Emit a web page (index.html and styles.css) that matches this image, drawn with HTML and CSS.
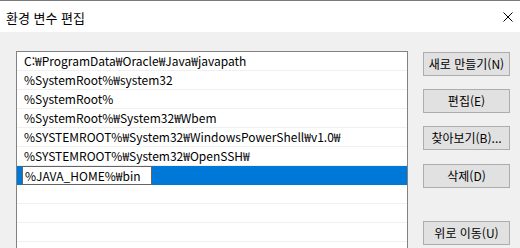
FILE: index.html
```html
<!DOCTYPE html>
<html lang="ko">
<head>
<meta charset="utf-8">
<link rel="stylesheet" href="styles.css">
</head>
<body>
<div class="window">
  <div class="titlebar">
    <span class="title">환경 변수 편집</span>
    <svg class="close" width="10" height="10" viewBox="0 0 10 10"><path d="M0.5 0.5 L9.5 9.5 M9.5 0.5 L0.5 9.5" stroke="#000" stroke-width="1" fill="none"/></svg>
  </div>
  <div class="content">
    <div class="list">
      <div class="row">C:₩ProgramData₩Oracle₩Java₩javapath</div>
      <div class="row">%SystemRoot%₩system32</div>
      <div class="row">%SystemRoot%</div>
      <div class="row">%SystemRoot%₩System32₩Wbem</div>
      <div class="row">%SYSTEMROOT%₩System32₩WindowsPowerShell₩v1.0₩</div>
      <div class="row">%SYSTEMROOT%₩System32₩OpenSSH₩</div>
      <div class="row selected"><span class="editbox">%JAVA_HOME%₩bin</span></div>
      <div class="row"></div>
      <div class="row"></div>
      <div class="row"></div>
      <div class="row"></div>
    </div>
    <div class="buttons">
      <button class="btn b1">새로 만들기(N)</button>
      <button class="btn b2">편집(E)</button>
      <button class="btn b3">찾아보기(B)...</button>
      <button class="btn b4">삭제(D)</button>
      <button class="btn b5">위로 이동(U)</button>
    </div>
  </div>
</div>
</body>
</html>
```

FILE: styles.css
```css
html, body {
  margin: 0;
  padding: 0;
}
body {
  width: 520px;
  height: 248px;
  overflow: hidden;
  background: #f0f0f0;
  font-family: "Noto Sans CJK KR", "Noto Sans", sans-serif;
  font-size: 12px;
  color: #000;
}
.window {
  width: 520px;
  height: 248px;
  border-top: 1px solid #7a7a7a;
  box-sizing: border-box;
  overflow: hidden;
}
.titlebar {
  height: 31px;
  background: #fff;
  display: flex;
  align-items: center;
  justify-content: space-between;
  padding: 0 7px 0 6px;
  box-sizing: border-box;
}
.title {
  font-size: 13px;
  line-height: 1;
  margin-top: 1px;
}
.close {
  display: block;
  margin-top: 1px;
}
.content {
  display: flex;
  align-items: flex-start;
  padding: 19px 0 0 16px;
}
.list {
  width: 392px;
  height: 220px;
  box-sizing: border-box;
  border: 1px solid #828282;
  border-bottom: none;
  background: #fff;
}
.row {
  height: 19px;
  box-sizing: border-box;
  border-bottom: 1px solid #f0f0f0;
  padding-left: 7px;
  line-height: 18px;
  white-space: nowrap;
  position: relative;
}
.row.selected {
  background: #0078d7;
  border-bottom-color: #0078d7;
}
.editbox {
  position: absolute;
  left: 5px;
  top: 0;
  width: 130px;
  height: 19px;
  box-sizing: border-box;
  border: 1px solid #646464;
  background: #fff;
  padding-left: 2px;
  line-height: 17px;
  color: #000;
}
.buttons {
  display: flex;
  flex-direction: column;
  margin-left: 15px;
  margin-top: 1px;
}
.btn {
  width: 87px;
  height: 24px;
  box-sizing: border-box;
  border: 1px solid #adadad;
  background: #e1e1e1;
  font-family: inherit;
  font-size: 12px;
  color: #000;
  padding: 0;
  white-space: nowrap;
  line-height: 20px;
}
.b2, .b3 { margin-top: 13px; }
.b4 { margin-top: 14px; }
.b5 { margin-top: 33px; }
```
